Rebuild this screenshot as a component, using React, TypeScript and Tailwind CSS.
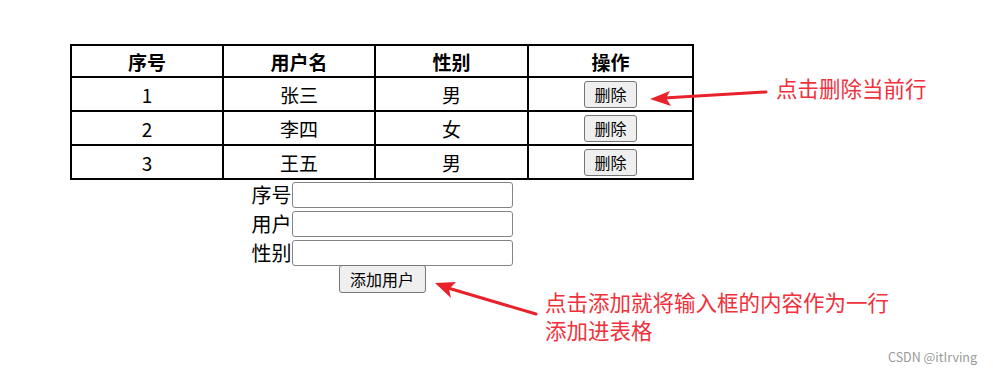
import React from "react";

const rows = [
  { id: "1", name: "张三", sex: "男" },
  { id: "2", name: "李四", sex: "女" },
  { id: "3", name: "王五", sex: "男" },
];

const font = { fontFamily: '"Noto Sans CJK SC", "Noto Sans", sans-serif' };

export default function App() {
  return (
    <div
      className="relative w-[993px] h-[379px] bg-white text-black overflow-hidden"
      style={font}
    >
      <div className="pl-[70px] pt-[44px] w-[695px]">
        <table className="border-collapse border-2 border-black w-[624px] table-fixed">
          <thead>
            <tr className="h-[32px]">
              <th className="w-[152px] border-2 border-black text-[19px] font-bold leading-none">序号</th>
              <th className="w-[152px] border-2 border-black text-[19px] font-bold leading-none">用户名</th>
              <th className="w-[153px] border-2 border-black text-[19px] font-bold leading-none">性别</th>
              <th className="border-2 border-black text-[19px] font-bold leading-none">操作</th>
            </tr>
          </thead>
          <tbody>
            {rows.map((r) => (
              <tr key={r.id} className="h-[34px]">
                <td className="border-2 border-black text-center text-[19px] leading-none">{r.id}</td>
                <td className="border-2 border-black text-center text-[19px] leading-none">{r.name}</td>
                <td className="border-2 border-black text-center text-[19px] leading-none">{r.sex}</td>
                <td className="border-2 border-black text-center leading-none">
                  <button className="inline-flex items-center justify-center w-[53px] h-[27px] border border-[#767676] rounded-[3px] bg-[#efefef] text-[16px] leading-none align-middle">
                    删除
                  </button>
                </td>
              </tr>
            ))}
          </tbody>
        </table>
        <div className="flex flex-col items-center w-[624px]">
          {["序号", "用户", "性别"].map((l) => (
            <div key={l} className="flex items-center h-[29px]">
              <span className="text-[20px] leading-none">{l}</span>
              <div className="w-[221px] h-[26px] border border-[#858585] rounded-[3px] bg-white" />
            </div>
          ))}
          <button className="mt-[-2px] flex items-center justify-center w-[87px] h-[28px] border border-[#767676] rounded-[3px] bg-[#efefef] text-[16px] leading-none">
            添加用户
          </button>
        </div>
      </div>

      <svg className="absolute left-0 top-0" width="993" height="379" viewBox="0 0 993 379">
        <line x1="766" y1="92" x2="664" y2="98" stroke="#e8212b" strokeWidth="3" strokeLinecap="round" />
        <polygon points="650,99 670,91 666,98 671,106" fill="#e8212b" />
        <line x1="536" y1="314" x2="448" y2="288" stroke="#e8212b" strokeWidth="3" strokeLinecap="round" />
        <polygon points="435,283 456,282 449,289 451,298" fill="#e8212b" />
      </svg>

      <div className="absolute left-[776px] top-[74px] text-[21.5px] leading-[28px] text-[#f0313c]">
        点击删除当前行
      </div>
      <div className="absolute left-[545px] top-[288px] text-[21.5px] leading-[28px] text-[#f0313c]">
        <div>点击添加就将输入框的内容作为一行</div>
        <div>添加进表格</div>
      </div>
      <div className="absolute left-[888px] top-[351px] text-[12.5px] leading-none text-[#999999]">
        CSDN @itIrving
      </div>
    </div>
  );
}
